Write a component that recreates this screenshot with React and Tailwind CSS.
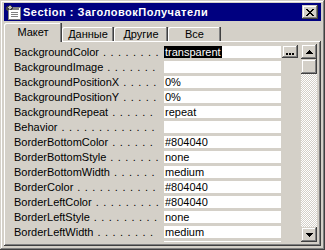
import React, { useMemo } from "react";

const raised =
  "shadow-[inset_-1px_-1px_#404040,inset_1px_1px_#d4d0c8,inset_-2px_-2px_#808080,inset_2px_2px_#ffffff]";

const rows = [
  ["BackgroundColor", "transparent"],
  ["BackgroundImage", ""],
  ["BackgroundPositionX", "0%"],
  ["BackgroundPositionY", "0%"],
  ["BackgroundRepeat", "repeat"],
  ["Behavior", ""],
  ["BorderBottomColor", "#804040"],
  ["BorderBottomStyle", "none"],
  ["BorderBottomWidth", "medium"],
  ["BorderColor", "#804040"],
  ["BorderLeftColor", "#804040"],
  ["BorderLeftStyle", "none"],
  ["BorderLeftWidth", "medium"],
];

function useDotCounts() {
  return useMemo(() => {
    let ctx = null;
    try {
      ctx = document.createElement("canvas").getContext("2d");
      ctx.font = "11px 'Liberation Sans', Arial, sans-serif";
    } catch (e) {
      ctx = null;
    }
    return rows.map(([label]) => {
      const w = ctx ? ctx.measureText(label).width : label.length * 5.7;
      const avail = 146 - 4 - w - 4;
      return Math.max(0, Math.floor(avail / 7.5) + 1);
    });
  }, []);
}

function TitleIcon() {
  return (
    <svg width="16" height="16" viewBox="0 0 16 16" shapeRendering="crispEdges">
      <rect x="3" y="3" width="12" height="12" fill="#ffffff" stroke="#808080" />
      <rect x="4" y="4" width="10" height="2" fill="#808080" />
      <rect x="6" y="8" width="7" height="1" fill="#808080" />
      <rect x="6" y="10" width="7" height="1" fill="#808080" />
      <rect x="6" y="12" width="7" height="1" fill="#808080" />
      <path d="M1 3 L5 1 L8 4 L6 6 L4 5 L3 8 L1 6 Z" fill="#404040" />
      <path d="M2 4 L5 2 L7 4 L5 5 L3 4 Z" fill="#c0c0c0" />
    </svg>
  );
}

function CloseGlyph() {
  return (
    <svg width="8" height="7" viewBox="0 0 8 7" shapeRendering="crispEdges">
      <path d="M0 0h2v1h1v1h2v-1h1v-1h2v1h-1v1h-1v1h-1v1h1v1h1v1h1v1h-2v-1h-1v-1h-2v1h-1v1h-2v-1h1v-1h1v-1h1v-1h-1v-1h-1v-1h-1z" fill="#000" />
    </svg>
  );
}

function Arrow({ down }) {
  return (
    <svg width="7" height="4" viewBox="0 0 7 4" shapeRendering="crispEdges">
      {down ? (
        <path d="M0 0h7v1h-1v1h-1v1h-1v1h-1v-1h-1v-1h-1v-1h-1z" fill="#000" />
      ) : (
        <path d="M3 0h1v1h1v1h1v1h1v1h-7v-1h1v-1h1v-1h1z" fill="#000" />
      )}
    </svg>
  );
}

function Tab({ label, selected, w }) {
  if (selected) {
    return (
      <div
        className={`relative z-10 mb-[-1px] h-[19px] ${w} bg-[#d4d0c8] rounded-tl-[2px] shadow-[inset_-1px_0_#404040,inset_-2px_0_#808080,inset_1px_1px_#ffffff] flex justify-center pt-[3px] leading-[13px]`}
      >
        {label}
      </div>
    );
  }
  return (
    <div
      className={`h-[14px] ${w} bg-[#d4d0c8] rounded-tl-[2px] shadow-[inset_-1px_0_#404040,inset_-2px_0_#808080,inset_1px_1px_#ffffff] flex justify-center pt-[1px] leading-[13px]`}
    >
      {label}
    </div>
  );
}

export default function App() {
  const dots = useDotCounts();
  return (
    <div
      className={`w-[325px] h-[250px] bg-[#d4d0c8] ${raised} px-[4px] pt-[3px] pb-[4px] flex flex-col font-['Liberation_Sans',Arial,sans-serif] text-[11px] text-black overflow-hidden`}
    >
      {/* Title bar */}
      <div className="h-[18px] shrink-0 bg-[#000080] flex items-center pl-[1px] pr-[3px]">
        <TitleIcon />
        <span className="ml-[2px] flex-1 text-white font-bold text-[11px] tracking-[0.5px] leading-[16px] whitespace-nowrap">
          Section : ЗаголовокПолучатели
        </span>
        <div className={`w-[16px] h-[14px] bg-[#d4d0c8] ${raised} flex items-center justify-center`}>
          <CloseGlyph />
        </div>
      </div>

      {/* Tabs */}
      <div className="h-[20px] shrink-0 flex items-end">
        <Tab label="Макет" selected w="w-[58px]" />
        <Tab label="Данные" w="w-[52px]" />
        <Tab label="Другие" w="w-[54px]" />
        <Tab label="Все" w="w-[53px]" />
      </div>

      {/* Panel */}
      <div className="flex-1 bg-[#d4d0c8] shadow-[inset_-1px_-1px_#404040,inset_1px_1px_#ffffff,inset_-2px_-2px_#808080] pt-[3px] pl-[2px] pr-[4px] pb-[4px] flex">
        <div className="w-[295px] h-[198px] pt-[1px] overflow-hidden flex flex-col">
          {rows.map(([label, value], i) => (
            <div key={label} className="h-[15px] shrink-0 flex items-start">
              <div className="w-[154px] h-full flex items-center pl-[8px] overflow-hidden whitespace-nowrap leading-[13px]">
                <span>{label}</span>
                <span className="ml-[4px] tracking-[0.7px]">{Array(dots[i]).fill(".").join(" ")}</span>
              </div>
              <div className="ml-[4px] mt-[1px] w-[117px] h-[12px] bg-white flex items-center leading-[12px] whitespace-nowrap">
                {i === 0 ? (
                  <span className="bg-black text-white h-full pl-[1px] pr-[1px]">{value}</span>
                ) : (
                  <span className="pl-[1px]">{value}</span>
                )}
              </div>
              {i === 0 && (
                <div
                  className={`ml-[1px] w-[16px] h-[13px] bg-[#d4d0c8] ${raised} flex items-end justify-center pb-[3px] gap-[1px]`}
                >
                  <span className="w-[2px] h-[2px] bg-black" />
                  <span className="w-[2px] h-[2px] bg-black" />
                  <span className="w-[2px] h-[2px] bg-black" />
                </div>
              )}
            </div>
          ))}
          {/* next row, only its top edge is visible */}
          <div className="h-[15px] shrink-0 flex items-start">
            <div className="w-[154px] h-full" />
            <div className="ml-[4px] mt-[1px] w-[117px] h-[12px] bg-white" />
          </div>
        </div>
        {/* Scrollbar */}
        <div className="ml-[2px] w-[16px] h-[198px] flex flex-col">
          <div className={`h-[15px] shrink-0 bg-[#d4d0c8] ${raised} flex items-center justify-center`}>
            <Arrow />
          </div>
          <div className={`h-[15px] shrink-0 bg-[#d4d0c8] ${raised}`} />
          <div className="flex-1 bg-[image:repeating-conic-gradient(#ffffff_0_25%,#d4d0c8_0_50%)] bg-[length:2px_2px]" />
          <div className={`h-[15px] shrink-0 bg-[#d4d0c8] ${raised} flex items-center justify-center`}>
            <Arrow down />
          </div>
        </div>
      </div>
    </div>
  );
}
